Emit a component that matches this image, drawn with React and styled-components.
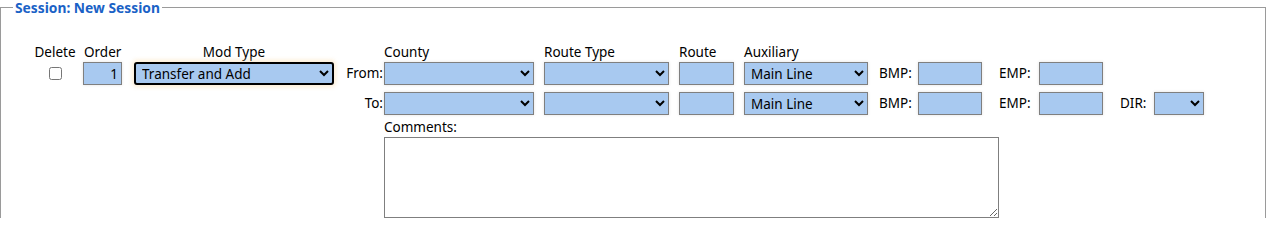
import styled, { createGlobalStyle } from 'styled-components';

const GlobalStyle = createGlobalStyle`
  html,
  body {
    height: 218px;
    overflow: hidden;
  }

  body {
    margin: 0;
    background: #fff;
    font-family: 'Noto Sans', 'Open Sans', Arial, sans-serif;
    font-size: 13.5px;
    color: #000;
  }
`;

const StyledFieldset = styled.fieldset`
  box-sizing: border-box;
  width: 1266px;
  margin: 0;
  padding: 28px 0 12px 12px;
  border: 1px solid #9a9a9a;
`;

const StyledLegend = styled.legend`
  padding: 0 2px;
  font-size: 13.8px;
  line-height: 15px;
  font-weight: bold;
  color: #1a62c6;
`;

const StyledGrid = styled.div`
  display: grid;
  margin-left: 17px;
  grid-template-columns: 50px 54px 200px 50px 160px 135px 65px 135px 39px 81px 40px 81px 34px 50px;
  grid-template-rows: 19px 30px 26px 19px 81px;
  align-items: start;
`;

const StyledHead = styled.div`
  grid-column: ${(p) => p.col};
  grid-row: 1;
  line-height: 18px;
  text-align: ${(p) => p.align || 'left'};
  padding-left: ${(p) => p.pad || 0}px;
  white-space: nowrap;
`;

const StyledLabel = styled.label`
  grid-column: ${(p) => p.col};
  grid-row: ${(p) => p.row};
  line-height: 23px;
  text-align: ${(p) => p.align || 'left'};
  padding-right: ${(p) => p.padRight || 0}px;
  white-space: nowrap;
`;

const StyledCheck = styled.input`
  grid-column: 1;
  grid-row: 2;
  justify-self: center;
  width: 13px;
  height: 13px;
  margin: 5px 0 0 0;
`;

const StyledText = styled.input`
  grid-column: ${(p) => p.col};
  grid-row: ${(p) => p.row};
  box-sizing: border-box;
  width: ${(p) => p.w}px;
  height: 23px;
  margin: 0 0 0 ${(p) => p.ml || 0}px;
  padding: 0 3px;
  border: 1px solid #7f7f7f;
  border-radius: 0;
  background: #a8c9f0;
  box-shadow: 0 0 3px rgba(0, 0, 0, 0.12);
  font-family: inherit;
  font-size: 13.5px;
  text-align: ${(p) => p.align || 'left'};
  outline: none;
`;

const StyledSelect = styled.select`
  grid-column: ${(p) => p.col};
  grid-row: ${(p) => p.row};
  box-sizing: border-box;
  width: ${(p) => p.w}px;
  height: 23px;
  margin: 0;
  padding: 0 2px;
  border: ${(p) => (p.focused ? '2px solid #000' : '1px solid #7f7f7f')};
  border-radius: ${(p) => (p.focused ? '3px' : '0')};
  background-color: #a8c9f0;
  box-shadow: ${(p) =>
    p.focused
      ? '0 0 4px 2px rgba(250, 215, 160, 0.45)'
      : '0 0 3px rgba(0, 0, 0, 0.12)'};
  font-family: inherit;
  font-size: 13.5px;
  color: #000;
  outline: none;
`;

const StyledCommentsLabel = styled.label`
  grid-column: 5 / span 6;
  grid-row: 4;
  line-height: 18px;
`;

const StyledComments = styled.textarea`
  grid-column: 5 / span 7;
  grid-row: 5;
  box-sizing: border-box;
  width: 615px;
  height: 81px;
  margin: 0;
  border: 1px solid #7f7f7f;
  border-radius: 0;
  font-family: inherit;
  font-size: 13.5px;
  resize: both;
  outline: none;
`;

const auxOptions = ['Main Line', 'Ramp', 'Frontage Road'];

const RouteRow = ({ row, label, withDir }) => (
  <>
    <StyledLabel col={4} row={row} align="right" padRight={1}>
      {label}
    </StyledLabel>
    <StyledSelect col={5} row={row} w={150} defaultValue="">
      <option value=""></option>
    </StyledSelect>
    <StyledSelect col={6} row={row} w={125} defaultValue="">
      <option value=""></option>
    </StyledSelect>
    <StyledText col={7} row={row} w={55} />
    <StyledSelect col={8} row={row} w={124} defaultValue="Main Line">
      {auxOptions.map((o) => (
        <option key={o}>{o}</option>
      ))}
    </StyledSelect>
    <StyledLabel col={9} row={row}>BMP:</StyledLabel>
    <StyledText col={10} row={row} w={64} />
    <StyledLabel col={11} row={row}>EMP:</StyledLabel>
    <StyledText col={12} row={row} w={64} />
    {withDir && (
      <>
        <StyledLabel col={13} row={row}>DIR:</StyledLabel>
        <StyledSelect col={14} row={row} w={50} defaultValue="">
          <option value=""></option>
        </StyledSelect>
      </>
    )}
  </>
);

const App = () => {
  return (
    <>
      <GlobalStyle />
      <StyledFieldset>
        <StyledLegend>Session: New Session</StyledLegend>
        <StyledGrid>
          <StyledHead col={1} align="center">Delete</StyledHead>
          <StyledHead col={2} pad={4}>Order</StyledHead>
          <StyledHead col={3} align="center">Mod Type</StyledHead>
          <StyledHead col={5}>County</StyledHead>
          <StyledHead col={6}>Route Type</StyledHead>
          <StyledHead col={7}>Route</StyledHead>
          <StyledHead col={8}>Auxiliary</StyledHead>

          <StyledCheck type="checkbox" />
          <StyledText col={2} row={2} w={39} ml={3} align="right" defaultValue="1" />
          <StyledSelect col={3} row={2} w={200} focused defaultValue="Transfer and Add">
            <option>Transfer and Add</option>
            <option>Transfer</option>
            <option>Add</option>
          </StyledSelect>

          <RouteRow row={2} label="From:" />
          <RouteRow row={3} label="To:" withDir />

          <StyledCommentsLabel>Comments:</StyledCommentsLabel>
          <StyledComments />
        </StyledGrid>
      </StyledFieldset>
    </>
  );
};

export default App;
